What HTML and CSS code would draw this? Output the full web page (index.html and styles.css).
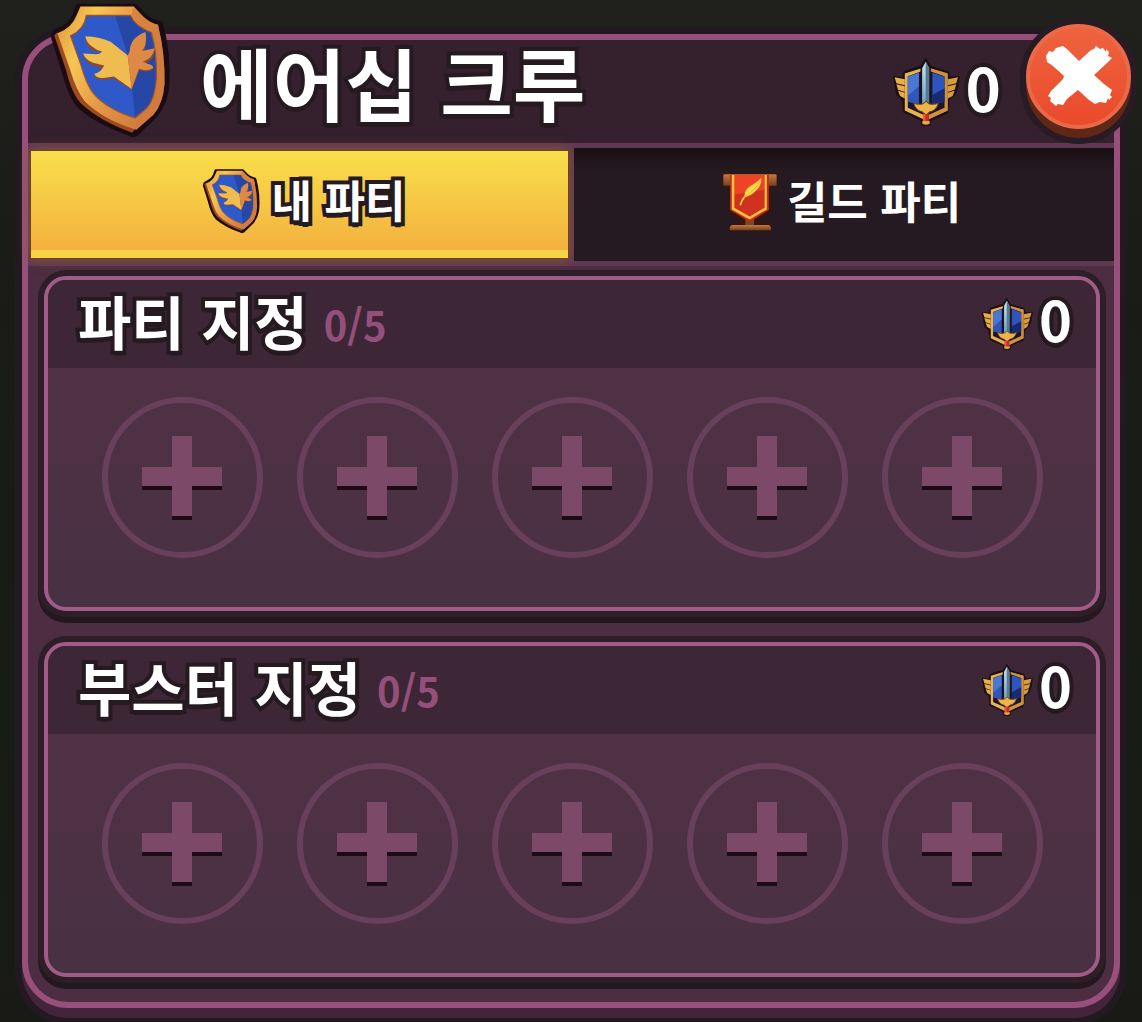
FILE: index.html
```
<!DOCTYPE html>
<html lang="ko">
<head>
    <meta charset="UTF-8">
    <meta name="viewport" content="width=device-width, initial-scale=1.0">
    <title>에어십 크루</title>
    <link rel="stylesheet" href="styles.css">
</head>
<body>
    <!-- Shared icons -->
    <svg class="icon-defs" aria-hidden="true">
        <defs>
            <linearGradient id="goldRim" x1="0" y1="0" x2="1" y2="0.5">
                <stop offset="0" stop-color="#e09238"/>
                <stop offset="0.3" stop-color="#f6c655"/>
                <stop offset="0.6" stop-color="#e79a45"/>
                <stop offset="1" stop-color="#cf7a3c"/>
            </linearGradient>
            <linearGradient id="blade" x1="0" y1="0" x2="0" y2="1">
                <stop offset="0" stop-color="#cfe6f2"/>
                <stop offset="1" stop-color="#6a9fc2"/>
            </linearGradient>
            <linearGradient id="wood" x1="0" y1="0" x2="0" y2="1">
                <stop offset="0" stop-color="#c07b40"/>
                <stop offset="1" stop-color="#74401c"/>
            </linearGradient>
        </defs>

        <symbol id="shield" viewBox="146 6 368 408">
            <path d="M232 15 H406 L434 44 Q452 62 484 68 L494 110 Q510 190 502 272 Q494 318 466 350 L412 402 Q402 412 388 402 Q300 374 238 322 Q208 288 190 214 L158 112 Q156 96 170 90 Q210 74 222 44 Z" fill="#1a0c12" stroke="#1a0c12" stroke-width="14" stroke-linejoin="round"/>
            <path d="M170 96 L160 104 L196 210 Q214 284 242 312 Q300 366 398 401 L410 384 Z" fill="#9c4a20"/>
            <path d="M240 17 H402 L430 46 Q450 66 476 72 Q498 160 496 252 Q492 312 462 346 L410 392 Q310 362 254 306 Q228 276 208 208 L170 98 Q214 82 228 44 Z" fill="url(#goldRim)"/>
            <path d="M402 17 L430 46 Q450 66 476 72 Q498 160 496 252 Q492 312 462 346 L410 392 L406 356 L452 316 Q474 280 472 226 Q472 150 456 96 Q424 82 414 66 L394 46 Z" fill="#d17c3e" opacity=".7"/>
            <path d="M258 44 H392 Q408 78 456 96 Q474 158 471 236 Q466 300 442 326 L406 356 Q322 330 280 282 Q258 254 242 196 L210 106 Q252 86 258 44 Z" fill="#2f59c8" stroke="#9a552b" stroke-width="4"/>
            <path d="M346 46 H391 Q408 80 454 98 Q471 158 469 236 Q464 300 440 324 L406 353 L398 270 L384 164 Z" fill="#2747a6"/>
            <path d="M255 116 Q256 130 270 146 Q286 156 304 156 Q306 162 292 166 L248 162 Q252 184 276 196 L310 206 Q304 218 282 226 Q286 240 308 240 L340 236 L396 270 L420 210 Q446 220 462 208 Q462 198 446 196 L432 190 Q452 190 464 164 L466 146 L430 160 Q442 142 440 98 Q396 110 390 156 L380 168 L332 128 Z" fill="#8d4a2c"/>
            <path d="M255 107 Q258 126 274 138 Q288 150 306 154 Q300 162 290 162 L248 160 Q256 180 278 188 L312 196 Q304 216 282 222 Q290 236 310 234 L342 230 L396 268 L384 166 L332 124 Q296 108 255 107 Z" fill="#eebc50"/>
            <path d="M384 166 L390 154 Q390 112 438 94 Q444 132 428 152 L466 144 Q460 176 430 184 L446 192 Q460 194 462 204 Q444 216 418 206 L396 268 Z" fill="#dd8a47"/>
        </symbol>

        <symbol id="emblem" viewBox="68 138 202 202">
            <path d="M168 142 L182 164 L234 180 L240 196 L266 194 L262 224 L254 246 L236 262 L232 300 L182 322 L180 337 H158 L156 322 L104 298 L100 262 L84 248 L74 194 L100 198 L104 180 L156 162 Z" fill="#1b1016" stroke="#1b1016" stroke-width="6" stroke-linejoin="round"/>
            <path d="M76 195 L106 201 V219 L81 213 Z M81 216 L106 222 V239 L86 232 Z M86 235 L106 241 V258 L92 251 Z" fill="#e9ad45"/>
            <path d="M264 195 L234 201 V219 L259 213 Z M259 216 L234 222 V239 L254 232 Z M254 235 L234 241 V258 L248 251 Z" fill="#d99c3b"/>
            <path d="M106 184 L168 165 L233 184 V294 L169 324 L106 294 Z" fill="#e8b24c"/>
            <path d="M168 165 L233 184 V294 L169 324 Z" fill="#d29138"/>
            <path d="M115 192 L168 173 L224 192 V286 L169 310 L115 286 Z" fill="#1c1530"/>
            <path d="M115 194 L148 182 V276 L115 268 Z" fill="#2f56bc"/>
            <path d="M115 194 L148 182 V222 L115 250 Z" fill="#4a76d4"/>
            <path d="M188 182 L224 194 V268 L188 276 Z" fill="#2d55bd"/>
            <path d="M224 228 L188 248 V276 L224 268 Z" fill="#172a72"/>
            <path d="M168 144 L181 168 V280 H155 V168 Z" fill="url(#blade)" stroke="#1b1016" stroke-width="5"/>
            <path d="M168 148 L178 168 V278 H168 Z" fill="#537b94"/>
            <path d="M132 272 Q148 278 160 274 L169 266 L178 274 Q192 278 206 272 Q200 294 180 298 L169 308 L158 298 Q138 294 132 272 Z" fill="#edb548" stroke="#70401e" stroke-width="3"/>
            <rect x="160" y="304" width="18" height="22" fill="#c92b24"/>
            <rect x="160" y="304" width="7" height="22" fill="#ef5444"/>
            <path d="M158 325 H180 V333 Q169 339 158 333 Z" fill="#e6a73e"/>
        </symbol>

        <symbol id="banner" viewBox="66 80 172 180">
            <path d="M72 86 H230 V124 H212 V200 L170 230 V234 H212 V254 H92 V236 H136 V228 L92 200 V124 H72 Z" fill="#38160f" stroke="#38160f" stroke-width="6" stroke-linejoin="round"/>
            <rect x="73" y="88" width="158" height="34" rx="4" fill="url(#wood)"/>
            <path d="M138 218 H164 V242 H138 Z" fill="#80461f"/>
            <path d="M98 238 H208 L214 244 V254 H92 V244 Z" fill="url(#wood)"/>
            <path d="M93 90 H208 V194 L151 229 L93 194 Z" fill="#c42c1d"/>
            <path d="M98 90 H106 V187 L151 213 L195 187 V90 H202 V192 L151 222 L98 192 Z" fill="#fbc13d"/>
            <path d="M107 90 H194 V186 L151 211 L107 186 Z" fill="#ee4326"/>
            <path d="M107 148 L194 134 V186 L151 211 L107 186 Z" fill="#cf3320"/>
            <path d="M186 98 Q186 122 170 136 Q158 150 138 156 Q128 168 125 181 L121 178 Q126 160 136 150 Q136 134 154 122 Q174 112 186 98 Z" fill="#ffd84a"/>
            <path d="M183 106 Q168 134 136 154" fill="none" stroke="#e7982e" stroke-width="2"/>
        </symbol>

        <symbol id="plus" viewBox="0 0 80 84">
            <path d="M0 35 H80 V54 H50 V84 H30 V54 H0 Z" fill="#1b0b14"/>
            <path d="M30 0 H50 V31 H80 V50 H50 V80 H30 V50 H0 V31 H30 Z" fill="#7c4a68"/>
        </symbol>
    </svg>

    <main class="panel">
        <svg class="panel-crest" aria-hidden="true"><use href="#shield"/></svg>
        <button class="close-button" aria-label="닫기">
            <svg class="close-icon" viewBox="0 0 68 64" aria-hidden="true">
                <path d="M1 11 L4 6 L8 7 L11 3 L18 1 L23 5 L34 16 L46 5 L49 4 L51 1 L55 4 L58 3 L61 7 L61 4 L64 7 L63 11 L67 13 L62 18 L49 30 L59 39 L67 45 L65 50 L67 52 L64 55 L63 53 L61 58 L55 57 L50 59 L44 55 L33 45 L22 54 L18 60 L13 59 L11 61 L5 56 L6 53 L3 51 L6 46 L18 34 L19 31 L8 21 L2 17 Z" fill="#fff"/>
            </svg>
        </button>

        <header class="panel-header">
            <h1 class="panel-title outlined">에어십 크루</h1>
            <div class="power">
                <svg class="power-icon" aria-hidden="true"><use href="#emblem"/></svg>
                <span class="power-value outlined">0</span>
            </div>
        </header>

        <div class="tabs" role="tablist">
            <button class="tab active" role="tab" aria-selected="true">
                <svg class="tab-icon" aria-hidden="true"><use href="#shield"/></svg>
                <span class="tab-label outlined">내 파티</span>
            </button>
            <button class="tab" role="tab" aria-selected="false">
                <svg class="tab-icon" aria-hidden="true"><use href="#banner"/></svg>
                <span class="tab-label">길드 파티</span>
            </button>
        </div>

        <div class="sections">
            <section class="card">
                <div class="card-header">
                    <h2 class="card-title outlined">파티 지정</h2>
                    <span class="card-count">0/5</span>
                    <div class="power small">
                        <svg class="power-icon" aria-hidden="true"><use href="#emblem"/></svg>
                        <span class="power-value outlined">0</span>
                    </div>
                </div>
                <div class="slots">
                    <button class="slot" aria-label="파티 1"><svg class="slot-icon"><use href="#plus"/></svg></button>
                    <button class="slot" aria-label="파티 2"><svg class="slot-icon"><use href="#plus"/></svg></button>
                    <button class="slot" aria-label="파티 3"><svg class="slot-icon"><use href="#plus"/></svg></button>
                    <button class="slot" aria-label="파티 4"><svg class="slot-icon"><use href="#plus"/></svg></button>
                    <button class="slot" aria-label="파티 5"><svg class="slot-icon"><use href="#plus"/></svg></button>
                </div>
            </section>

            <section class="card">
                <div class="card-header">
                    <h2 class="card-title outlined">부스터 지정</h2>
                    <span class="card-count">0/5</span>
                    <div class="power small">
                        <svg class="power-icon" aria-hidden="true"><use href="#emblem"/></svg>
                        <span class="power-value outlined">0</span>
                    </div>
                </div>
                <div class="slots">
                    <button class="slot" aria-label="부스터 1"><svg class="slot-icon"><use href="#plus"/></svg></button>
                    <button class="slot" aria-label="부스터 2"><svg class="slot-icon"><use href="#plus"/></svg></button>
                    <button class="slot" aria-label="부스터 3"><svg class="slot-icon"><use href="#plus"/></svg></button>
                    <button class="slot" aria-label="부스터 4"><svg class="slot-icon"><use href="#plus"/></svg></button>
                    <button class="slot" aria-label="부스터 5"><svg class="slot-icon"><use href="#plus"/></svg></button>
                </div>
            </section>
        </div>
    </main>
</body>
</html>
```

FILE: styles.css
```
* {
    box-sizing: border-box;
}

body {
    margin: 0;
    padding: 34px 22px 14px;
    font-family: 'Noto Sans CJK KR', sans-serif;
    font-weight: 700;
    color: #fff;
    background: linear-gradient(180deg, #20211d 0%, #1a1b17 30%, #171c14 70%, #191a16 100%);
}

h1, h2 {
    margin: 0;
    font-weight: 700;
}

button {
    margin: 0;
    padding: 0;
    border: none;
    font: inherit;
    color: inherit;
    background: none;
    cursor: pointer;
}

svg {
    display: block;
}

.icon-defs {
    position: absolute;
    width: 0;
    height: 0;
}

.outlined {
    -webkit-text-stroke: 8px #241a20;
    paint-order: stroke fill;
    text-shadow: 0 5px 0 #241a20;
}

/* Window */

.panel {
    position: relative;
    border: 6px solid #984f7c;
    border-radius: 46px;
    background: #4d2d42;
    box-shadow: 0 10px 0 #43243a, 0 0 0 7px #231920, 0 10px 0 7px #231920;
}

.panel-crest {
    position: absolute;
    top: -37px;
    left: 21px;
    width: 122px;
    height: 134px;
}

.close-button {
    position: absolute;
    top: -16px;
    right: -17px;
    width: 105px;
    height: 105px;
    display: flex;
    align-items: center;
    justify-content: center;
    border: 4px solid #ea6a48;
    border-radius: 50%;
    background: linear-gradient(180deg, #ee633f, #ea4a2b);
    box-shadow: 0 9px 0 #5e2716, 0 0 0 6px #281b24, 0 9px 0 6px #281b24;
}

.close-icon {
    width: 68px;
    height: 64px;
}

.panel-header {
    display: flex;
    align-items: center;
    justify-content: space-between;
    height: 103px;
    padding: 0 113px 0 172px;
    border-radius: 40px 40px 0 0;
    background: #35202d;
}

.panel-title {
    padding-bottom: 20px;
    font-size: 79px;
    line-height: 80px;
}

.power {
    display: flex;
    align-items: center;
    gap: 6px;
}

.power-icon {
    width: 68px;
    height: 68px;
}

.power-value {
    padding-bottom: 12px;
    font-size: 60px;
    line-height: 72px;
}

.power.small .power-icon {
    width: 52px;
    height: 52px;
}

.power.small .power-value {
    font-size: 56px;
}

/* Tabs */

.tabs {
    display: grid;
    grid-template-columns: 1fr 1fr;
    gap: 6px;
    border-top: 5px solid #613852;
    border-bottom: 5px solid #613852;
    background: #613852;
}

.tab {
    display: flex;
    align-items: center;
    justify-content: center;
    gap: 8px;
    height: 113px;
    padding: 0 6px 6px 0;
    background: linear-gradient(180deg, #1a0e14 0, #251a21 24px);
}

.tab.active {
    gap: 12px;
    height: 107px;
    margin: 3px 0 3px 3px;
    padding: 0 0 0 8px;
    border-bottom: 8px solid #f8d348;
    background: linear-gradient(180deg, #f9df4b, #f3b13e);
    box-shadow: 0 0 0 1px #6b481c, 0 0 12px #8a5f2c;
}

.tab-icon {
    width: 58px;
    height: 64px;
}

.tab-label {
    padding-bottom: 4px;
    font-size: 44px;
    line-height: 56px;
}

/* Cards */

.sections {
    display: grid;
    gap: 31px;
    padding: 10px 14px 25px 16px;
}

.card {
    border: 4px solid #a05c86;
    border-radius: 22px;
    background: linear-gradient(180deg, #533145, #483142);
    box-shadow: 0 0 0 6px #2d1e28, 0 6px 0 6px #231820;
}

.card-header {
    display: flex;
    align-items: center;
    height: 88px;
    padding: 0 24px 0 30px;
    border-radius: 18px 18px 0 0;
    background: #3d2635;
}

.card-title {
    padding-bottom: 8px;
    font-size: 58px;
    line-height: 72px;
}

.card-count {
    margin-left: 16px;
    font-size: 40px;
    line-height: 72px;
    color: #954f7b;
}

.card-header .power {
    margin-left: auto;
}

.slots {
    display: flex;
    justify-content: center;
    gap: 34px;
    padding: 29px 0 49px;
}

.slot {
    width: 161px;
    height: 161px;
    display: flex;
    align-items: center;
    justify-content: center;
    border: 6px solid #69405b;
    border-radius: 50%;
}

.slot-icon {
    width: 80px;
    height: 84px;
}
```
